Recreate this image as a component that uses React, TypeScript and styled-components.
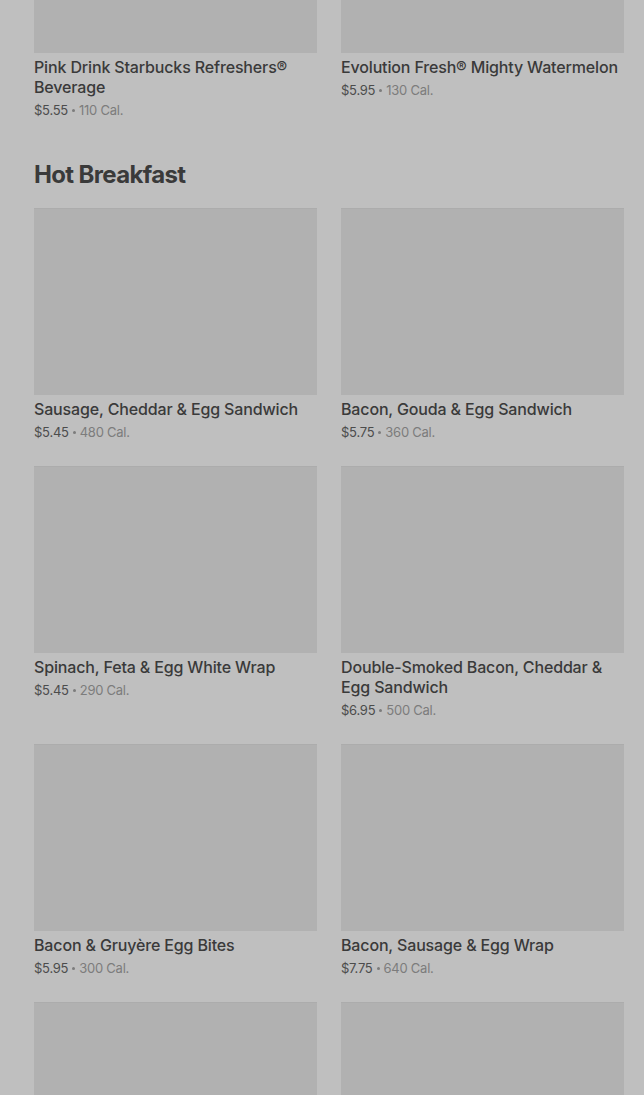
import React from "react";
import styled, { createGlobalStyle } from "styled-components";

const GlobalStyle = createGlobalStyle`
  html, body {
    margin: 0;
    padding: 0;
    background: #bfbfbf;
    overflow: hidden;
  }
  body {
    font-family: Inter, "Noto Sans", "Liberation Sans", sans-serif;
    color: #3b3b3b;
  }
`;

// page is scrolled: the first row's photos sit above the fold
const Page = styled.main`
  margin-top: -134px;
  padding: 0 20px 0 34px;
  height: 1229px;
  overflow: hidden;
`;

const Section = styled.section`
  display: flex;
  flex-direction: column;
`;

const SectionTitle = styled.h2`
  margin: 40px 0 18px;
  font-size: 24px;
  line-height: 30px;
  font-weight: 700;
  letter-spacing: -0.65px;
  color: #3a3a3a;
`;

const Grid = styled.ul`
  list-style: none;
  margin: 0;
  padding: 0;
  display: grid;
  grid-template-columns: 283px 283px;
  column-gap: 24px;
  row-gap: 24px;
  align-items: start;
`;

const Card = styled.li`
  display: flex;
  flex-direction: column;
`;

const Photo = styled.div`
  height: 187px;
  background: #b1b1b1;
  border-top: 1px solid #acacac;
  box-sizing: border-box;
`;

const Name = styled.div`
  margin-top: 4px;
  font-size: 16px;
  line-height: 20px;
  font-weight: 500;
  letter-spacing: -0.15px;
  color: #3a3a3a;
`;

const Meta = styled.div`
  display: flex;
  align-items: center;
  gap: 4px;
  height: 20px;
  margin-top: 3px;
  font-size: 13px;
  letter-spacing: -0.25px;
  color: #4c4c4c;
`;

const Dot = styled.span`
  width: 3px;
  height: 3px;
  border-radius: 50%;
  background: #7c7c7c;
`;

const Cal = styled.span`
  color: #7c7c7c;
`;

type Item = { name: string; price: string; cal: string };

const drinks: Item[] = [
  { name: "Pink Drink Starbucks Refreshers® Beverage", price: "$5.55", cal: "110 Cal." },
  { name: "Evolution Fresh® Mighty Watermelon", price: "$5.95", cal: "130 Cal." },
];

const breakfast: Item[] = [
  { name: "Sausage, Cheddar & Egg Sandwich", price: "$5.45", cal: "480 Cal." },
  { name: "Bacon, Gouda & Egg Sandwich", price: "$5.75", cal: "360 Cal." },
  { name: "Spinach, Feta & Egg White Wrap", price: "$5.45", cal: "290 Cal." },
  { name: "Double-Smoked Bacon, Cheddar & Egg Sandwich", price: "$6.95", cal: "500 Cal." },
  { name: "Bacon & Gruyère Egg Bites", price: "$5.95", cal: "300 Cal." },
  { name: "Bacon, Sausage & Egg Wrap", price: "$7.75", cal: "640 Cal." },
];

const MenuCard: React.FC<{ item?: Item }> = ({ item }) => (
  <Card>
    <Photo />
    {item && (
      <>
        <Name>{item.name}</Name>
        <Meta>
          <span>{item.price}</span>
          <Dot />
          <Cal>{item.cal}</Cal>
        </Meta>
      </>
    )}
  </Card>
);

export default function App() {
  return (
    <>
      <GlobalStyle />
      <Page>
        <Section>
          <Grid>
            {drinks.map((d) => (
              <MenuCard key={d.name} item={d} />
            ))}
          </Grid>
        </Section>
        <Section>
          <SectionTitle>Hot Breakfast</SectionTitle>
          <Grid>
            {breakfast.map((d) => (
              <MenuCard key={d.name} item={d} />
            ))}
            {/* next row, only the photos are in view */}
            <MenuCard />
            <MenuCard />
          </Grid>
        </Section>
      </Page>
    </>
  );
}
